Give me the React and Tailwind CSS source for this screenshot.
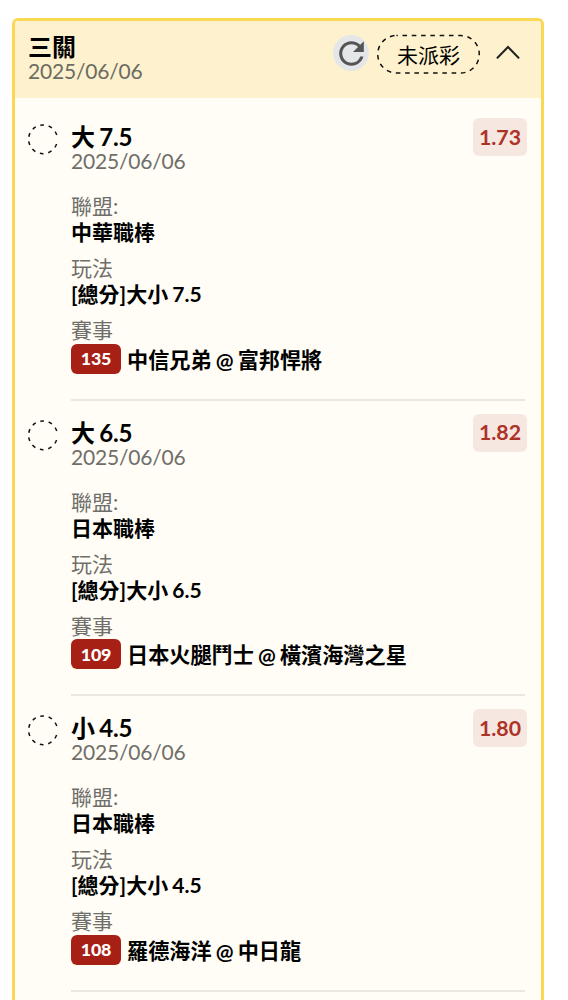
const BETS = [
  { pick: "大 7.5", date: "2025/06/06", odds: "1.73", league: "中華職棒", play: "[總分]大小 7.5", no: "135", game: "中信兄弟 @ 富邦悍將" },
  { pick: "大 6.5", date: "2025/06/06", odds: "1.82", league: "日本職棒", play: "[總分]大小 6.5", no: "109", game: "日本火腿鬥士 @ 橫濱海灣之星" },
  { pick: "小 4.5", date: "2025/06/06", odds: "1.80", league: "日本職棒", play: "[總分]大小 4.5", no: "108", game: "羅德海洋 @ 中日龍" },
];

function StatusCircle() {
  return (
    <svg className="mt-[3px] h-8 w-8 shrink-0" viewBox="0 0 32 32" fill="none" stroke="#111" strokeWidth="1.5">
      <circle cx="16" cy="16.3" r="14.4" pathLength="360" strokeDasharray="15 19.2" strokeDashoffset="-19.5" />
    </svg>
  );
}

function Header() {
  return (
    <header className="flex h-[77px] items-start justify-between bg-[#fdf2cd] pt-[13px] pr-[21px] pl-[13px]">
      <div>
        <h1 className="text-[24px] leading-[25px] font-bold">三關</h1>
        <p className="text-[21px] leading-[24px] tracking-[-0.2px] text-[#6d6b64]">2025/06/06</p>
      </div>
      <div className="flex items-start">
        <button className="mt-px flex h-9 w-9 items-center justify-center rounded-full bg-[#e5e6e8]" aria-label="refresh">
          <svg className="h-[37px] w-[37px] shrink-0" viewBox="0 0 24 24" fill="#555">
            <path d="M17.65 6.35A7.958 7.958 0 0 0 12 4c-4.42 0-7.99 3.58-7.99 8s3.57 8 7.99 8c3.73 0 6.84-2.55 7.73-6h-2.08A5.99 5.99 0 0 1 12 18c-3.31 0-6-2.69-6-6s2.69-6 6-6c1.66 0 3.14.69 4.22 1.78L13 11h7V4l-2.35 2.35z" />
          </svg>
        </button>
        <div className="relative ml-2 flex h-10 w-[103px] items-center justify-center">
          <svg className="absolute inset-0" width="103" height="40" fill="none">
            <rect x="0.75" y="1.5" width="101.5" height="37.5" rx="18.7" stroke="#111" strokeWidth="1.5" strokeDasharray="4.6 4.7" strokeDashoffset="3.3" />
          </svg>
          <span className="pt-px text-[21px] leading-[30px]">未派彩</span>
        </div>
        <svg className="mt-[10px] ml-4 h-4 w-6" viewBox="0 0 24 16" fill="none" stroke="#222" strokeWidth="2" strokeLinecap="round">
          <path d="M1.5 13.7 12 3l10.500 10.700" />
        </svg>
      </div>
    </header>
  );
}

function Detail({ label, children }) {
  return (
    <div className="h-[62.2px]">
      <p className="text-[21px] leading-[26px] text-[#6f6e6b]">{label}</p>
      <div className="text-[21px] leading-[26px] font-bold [word-spacing:-1px]">{children}</div>
    </div>
  );
}

function BetItem({ bet }) {
  return (
    <li className="flex h-[295.5px] pr-[14px] pl-[12px]">
      <StatusCircle />
      <div className="ml-3 flex-1">
        <div className="flex h-[73px] justify-between">
          <div>
            <h2 className="h-[26px] text-[24px] leading-[34px] font-bold tracking-[-0.1px] [word-spacing:-1.5px]">{bet.pick}</h2>
            <p className="text-[21px] leading-[30px] tracking-[-0.2px] text-[#6f6e6b]">{bet.date}</p>
          </div>
          <span className="-mt-[2px] flex h-[38px] w-[54px] items-center justify-center rounded-md bg-[#f6e7e1] pt-px text-[21.3px] font-bold text-[#ad3327]">
            {bet.odds}
          </span>
        </div>
        <Detail label="聯盟:">{bet.league}</Detail>
        <Detail label="玩法">{bet.play}</Detail>
        <Detail label="賽事">
          <div className="flex items-start pt-[0.5px] whitespace-nowrap">
            <span className="mr-[6px] flex h-[30px] w-[50px] shrink-0 items-center justify-center rounded-md bg-[#a72016] pb-px text-[17.8px] font-black tracking-[-0.1px] text-white">
              {bet.no}
            </span>
            <span className="pt-[3px] text-[21.15px]">{bet.game}</span>
          </div>
        </Detail>
        <hr className="mt-[19.3px] mr-[2px] border-t-2 border-[#e9e7e0]" />
      </div>
    </li>
  );
}

export default function App() {
  return (
    <main className="h-[1000px] w-[568px] overflow-hidden bg-white pt-[18px] pl-3 font-['Lato','Noto_Sans_CJK_TC',sans-serif] text-black">
      <section className="h-[1010px] w-[532px] overflow-hidden rounded-md border-[3px] border-[#fad854] bg-[#fffdf5]">
        <Header />
        <ul className="pt-[22px]">
          {BETS.map((bet) => (
            <BetItem key={bet.no} bet={bet} />
          ))}
        </ul>
      </section>
    </main>
  );
}
